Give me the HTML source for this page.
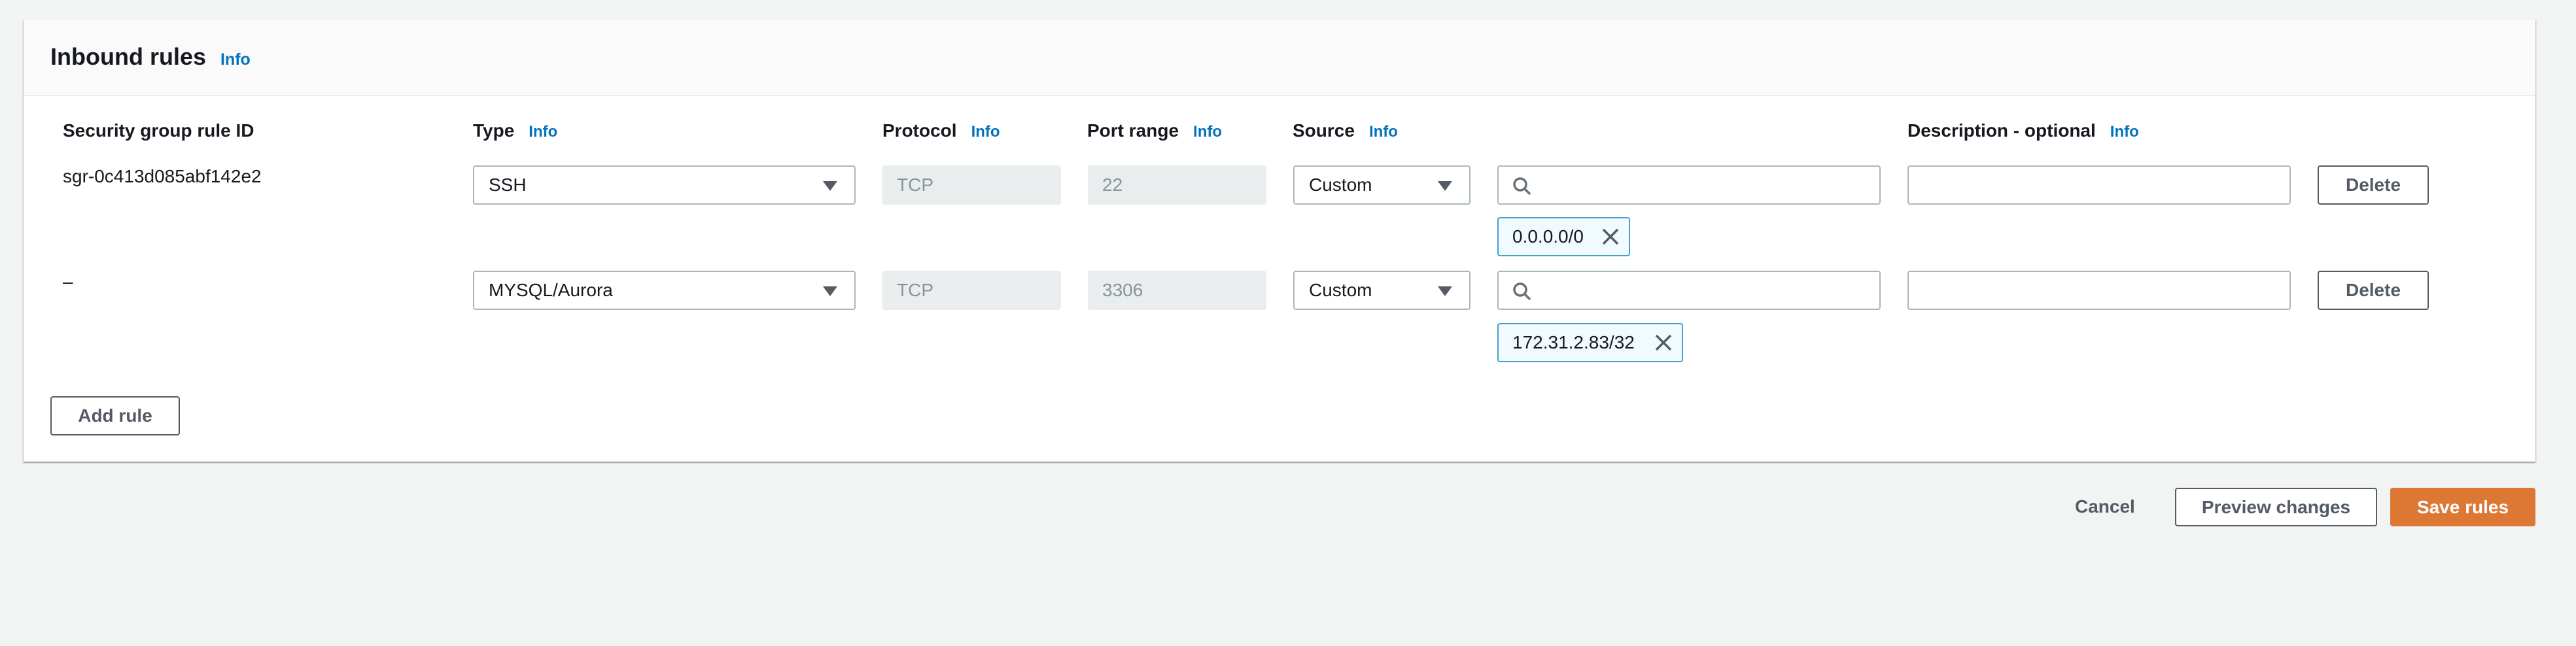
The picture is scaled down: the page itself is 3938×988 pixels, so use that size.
<!DOCTYPE html>
<html><head><meta charset="utf-8"><style>
*{box-sizing:border-box;margin:0;padding:0}
body{width:3938px;height:988px;background:#f2f3f3;font-family:"Liberation Sans",Arial,sans-serif;position:relative;overflow:hidden;color:#16191f}
.a{position:absolute}
.panel{left:36px;top:30px;width:3840px;height:676px;background:#fff;box-shadow:0 2px 2px rgba(0,28,36,.3),1px 1px 2px rgba(0,28,36,.15),-1px 1px 2px rgba(0,28,36,.15)}
.hdr{left:36px;top:30px;width:3840px;height:117px;background:#fafafa;border-bottom:2px solid #eaeded}
.t{font-size:36px;font-weight:bold}
.lbl{font-size:28px;font-weight:bold;line-height:40px}
.info{font-size:24px;font-weight:bold;color:#0073bb;margin-left:22px}
.in{border:2px solid #aab7b8;border-radius:4px;background:#fff;height:60px;font-size:28px;line-height:56px;padding-left:22px}
.dis{background:#eaeded;border-radius:4px;height:60px;font-size:28px;line-height:60px;padding-left:22px;color:#879596}
.arr{position:absolute;right:26px;top:22px;width:0;height:0;border-left:11px solid transparent;border-right:11px solid transparent;border-top:15px solid #545b64}
.chip{border:2px solid #44a0cc;border-radius:4px;background:#f1faff;height:60px;font-size:28px;line-height:56px;padding-left:21px}
.btn{border:2px solid #545b64;border-radius:4px;background:#fff;color:#545b64;font-weight:bold;font-size:28px;text-align:center}
.txt{font-size:28px}
</style></head><body>
<div class="a panel"></div>
<div class="a hdr"></div>
<div class="a t" style="left:77px;top:66px">Inbound rules<span class="info" style="font-size:25px">Info</span></div>

<div class="a lbl" style="left:96px;top:180px">Security group rule ID</div>
<div class="a lbl" style="left:723px;top:180px">Type<span class="info">Info</span></div>
<div class="a lbl" style="left:1349px;top:180px">Protocol<span class="info">Info</span></div>
<div class="a lbl" style="left:1662px;top:180px">Port range<span class="info">Info</span></div>
<div class="a lbl" style="left:1976px;top:180px">Source<span class="info">Info</span></div>
<div class="a lbl" style="left:2916px;top:180px">Description - optional<span class="info">Info</span></div>

<div class="a txt" style="left:96px;top:254px">sgr-0c413d085abf142e2</div>
<div class="a in" style="left:723px;top:253px;width:585px">SSH<div class="arr"></div></div>
<div class="a dis" style="left:1349px;top:253px;width:273px">TCP</div>
<div class="a dis" style="left:1663px;top:253px;width:273px">22</div>
<div class="a in" style="left:1977px;top:253px;width:271px">Custom<div class="arr"></div></div>
<div class="a in" style="left:2289px;top:253px;width:586px"><svg class="a" style="left:20px;top:14px" width="32" height="32" viewBox="0 0 32 32"><circle cx="13" cy="13" r="9" fill="none" stroke="#687078" stroke-width="3.5"/><path d="M19.5 19.5L28 28" stroke="#687078" stroke-width="3.5"/></svg></div>
<div class="a in" style="left:2916px;top:253px;width:586px"></div>
<div class="a btn" style="left:3543px;top:253px;width:170px;height:60px;line-height:56px">Delete</div>
<div class="a chip" style="left:2289px;top:332px;width:203px">0.0.0.0/0<svg class="a" style="left:157px;top:14px" width="28" height="28" viewBox="0 0 28 28"><path d="M3 3L25 25M25 3L3 25" stroke="#545b64" stroke-width="3.5"/></svg></div>

<div class="a txt" style="left:96px;top:415px">–</div>
<div class="a in" style="left:723px;top:414px;width:585px">MYSQL/Aurora<div class="arr"></div></div>
<div class="a dis" style="left:1349px;top:414px;width:273px">TCP</div>
<div class="a dis" style="left:1663px;top:414px;width:273px">3306</div>
<div class="a in" style="left:1977px;top:414px;width:271px">Custom<div class="arr"></div></div>
<div class="a in" style="left:2289px;top:414px;width:586px"><svg class="a" style="left:20px;top:14px" width="32" height="32" viewBox="0 0 32 32"><circle cx="13" cy="13" r="9" fill="none" stroke="#687078" stroke-width="3.5"/><path d="M19.5 19.5L28 28" stroke="#687078" stroke-width="3.5"/></svg></div>
<div class="a in" style="left:2916px;top:414px;width:586px"></div>
<div class="a btn" style="left:3543px;top:414px;width:170px;height:60px;line-height:56px">Delete</div>
<div class="a chip" style="left:2289px;top:494px;width:284px">172.31.2.83/32<svg class="a" style="left:238px;top:14px" width="28" height="28" viewBox="0 0 28 28"><path d="M3 3L25 25M25 3L3 25" stroke="#545b64" stroke-width="3.5"/></svg></div>

<div class="a btn" style="left:77px;top:606px;width:198px;height:60px;line-height:56px">Add rule</div>

<div class="a" style="left:3172px;top:755px;font-size:28px;font-weight:bold;color:#545b64;line-height:40px">Cancel</div>
<div class="a btn" style="left:3325px;top:746px;width:309px;height:59px;line-height:55px">Preview changes</div>
<div class="a" style="left:3654px;top:746px;width:222px;height:59px;line-height:59px;background:#dd7834;border-radius:4px;color:#fff;font-weight:bold;font-size:28px;text-align:center">Save rules</div>
</body></html>
